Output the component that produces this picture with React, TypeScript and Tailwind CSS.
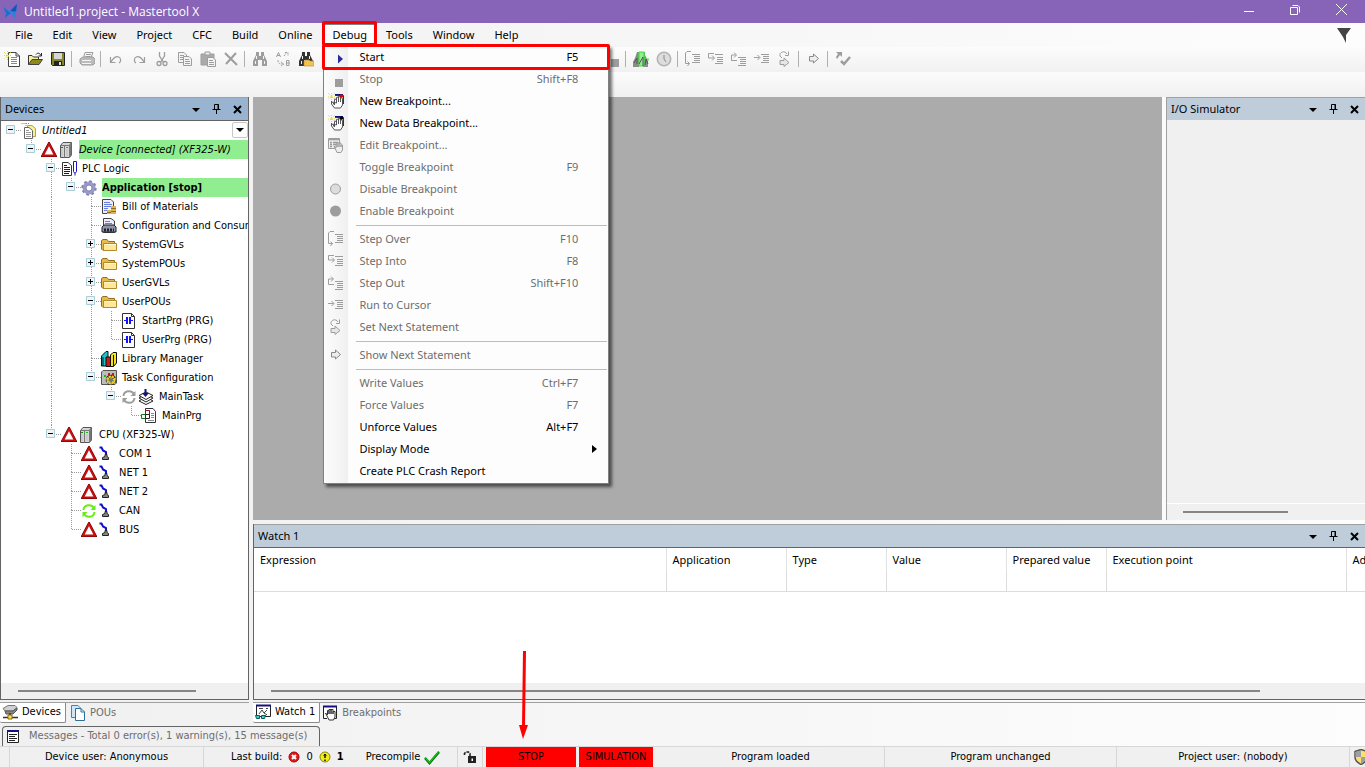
import React from 'react';

type IconProps = { children: React.ReactNode; size?: number };

const Icon: React.FC<IconProps> = ({ children, size = 16 }) => (
  <svg width={size} height={size} viewBox="0 0 16 16" fill="none" className="shrink-0" aria-hidden="true">
    {children}
  </svg>
);

const GRAY = '#9d9d9d';

const stepLines = 'M7 3.500h8M9 5.500h6M9 7.500h6M9 9.500h6M7 11.500h8';

const icons: Record<string, React.ReactNode> = {
  newFile: (
    <>
      <path d="M4.500 1.500H12L15.500 5V15.500H4.500Z" fill="#fff" stroke="#444" />
      <path d="M12 1.500V5H15.500" stroke="#444" />
      <path d="M7 6.500h6M7 8.500h6M7 10.500h6M7 12.500h6" stroke="#888" />
      <path d="M0 1l7 7M7 1L0 8M3.500 0v9M0 4.500h8" stroke="#d8d83a" strokeDasharray="1 1" />
    </>
  ),
  open: (
    <>
      <path d="M1.500 13.500V4.500H5L6.500 6H11.500V8.500" fill="#f5f09a" stroke="#333" />
      <path d="M1.500 13.500L5 8.500H15.500L12 13.500Z" fill="#8d8a1c" stroke="#444" />
      <path d="M9 3.500c2-2.500 4-1 5 1M14.500 2v3H11.500" stroke="#222" />
    </>
  ),
  save: (
    <>
      <path d="M1.500 1.500H14.500V14.500H2.500L1.500 13.500Z" fill="#85852a" stroke="#222" />
      <path d="M4 2h8v6H4z" fill="#d6d6d6" />
      <path d="M4 10h8v5H4z" fill="#222" />
      <path d="M9 11h2v3H9z" fill="#ddd" />
    </>
  ),
  print: (
    <>
      <path d="M4.500 6.500L6 1.500H14L12 6.500" fill="#f5f5f5" stroke={GRAY} />
      <path d="M7 3.500h5M6.500 5.500h5" stroke={GRAY} />
      <path d="M1 8l3-2h10l2 2v4l-2 2H3l-2-2z" fill="#bbb" stroke={GRAY} />
      <path d="M3 12.500h9M3 9.500h9" stroke="#f4f4f4" />
    </>
  ),
  undo: <path d="M2.500 6v5.500H7.500M3 11C6 5 10 4.500 12 7c1 2 .5 4-1 5" stroke={GRAY} strokeWidth="1.200" />,
  redo: <path d="M13.500 6v5.500H8.500M13 11C10 5 6 4.500 4 7c-1 2-.5 4 1 5" stroke={GRAY} strokeWidth="1.200" />,
  cut: (
    <>
      <path d="M5.500 1v4L10 12M10.500 1v4L6 12" stroke={GRAY} strokeWidth="1.300" />
      <circle cx="5" cy="12.500" r="2" stroke={GRAY} strokeWidth="1.300" />
      <circle cx="11" cy="12.500" r="2" stroke={GRAY} strokeWidth="1.300" />
    </>
  ),
  copy: (
    <>
      <path d="M1.500 1.500H7L9.500 4V11.500H1.500Z" fill="#f4f4f4" stroke={GRAY} />
      <path d="M3 4.500h4M3 6.500h5M3 8.500h4" stroke={GRAY} />
      <path d="M6.500 5.500H12L14.500 8V14.500H6.500Z" fill="#f4f4f4" stroke={GRAY} />
      <path d="M8 8.500h4M8 10.500h5M8 12.500h5" stroke={GRAY} />
    </>
  ),
  paste: (
    <>
      <path d="M1 3h13v11H1z" fill="#aaa" stroke={GRAY} />
      <path d="M5 1h5v3H5z" fill="#eee" stroke={GRAY} />
      <path d="M7.500 6.500H13L15.500 9V15.500H7.500Z" fill="#f4f4f4" stroke={GRAY} />
      <path d="M9 9.500h4M9 11.500h5M9 13.500h5" stroke={GRAY} />
    </>
  ),
  remove: <path d="M2 2l12 12M13 2L3 13" stroke={GRAY} strokeWidth="2" />,
  find: (
    <>
      <path d="M4 1h3v4h2V1h3v3l2 4 1 2v5h-5V9H6v6H1v-5l1-2 2-4z" fill={GRAY} />
      <path d="M4.500 5v3M11.500 5v3M3.500 10v3M12.500 10v3" stroke="#f4f4f4" />
    </>
  ),
  replace: (
    <>
      <path d="M1.500 6L3.500 1.500L5.500 6M2 4.500h3" stroke={GRAY} />
      <path d="M11.500 9.500h2.500v5h-2.500zM11.500 12h3" stroke={GRAY} />
      <path d="M9 5l3-4M10 1.500h3V5M3 9c0 4 2 4 5 4M6 11l3 2-3 2" stroke={GRAY} strokeDasharray="2 1" />
    </>
  ),
  findFolder: (
    <>
      <path d="M4 1h3v4h2V1h3v3l2 4 1 2v5h-5V9H6v6H1v-5l1-2 2-4z" fill="#333" />
      <path d="M4.500 5v3M11.500 5v3M3.500 10v3" stroke="#eee" />
      <path d="M6 10l2-1h3l1 1h4v5H6z" fill="#f2c34d" stroke="#b98a2b" strokeWidth=".6" />
    </>
  ),
  stopSmall: <path d="M7 8h8v8H7z" fill={GRAY} />,
  watchAll: (
    <>
      <path d="M4 1h3v4h2V1h3v3l2 4 1 2v6h-5V9H6v7H0v-5l2-4z" fill="#8c8c8c" />
      <path d="M6 1h5v14H6z" fill="#8df08d" stroke="#2fe52f" />
      <path d="M1 12l3-5v6M6 13l4-7v9M12 14l1-6 2 5" stroke="#555" />
      <path d="M12 5v3M15 7v3" stroke="#2fe52f" />
    </>
  ),
  clock: (
    <>
      <circle cx="8" cy="8" r="6.700" fill="#ddd" stroke="#b4b4b4" strokeWidth="1.600" />
      <path d="M8 4v4l2 3" stroke="#888" />
    </>
  ),
  stepOver: (
    <>
      <path d={stepLines} stroke={GRAY} />
      <path d="M6 .5H2L.5 2V12.500H4.500M2.500 10.500l2 2-2 2.500" stroke={GRAY} />
    </>
  ),
  stepInto: (
    <>
      <path d="M7 3.500h8M9 6.500h6M9 8.500h6M9 10.500h6M7 12.500h8" stroke={GRAY} />
      <path d="M6 2.500H.5V7H6M4 4.500L6.500 7L4 9.500" stroke={GRAY} />
    </>
  ),
  stepOut: (
    <>
      <path d="M7 6.500h8M9 8.500h6M9 10.500h6M9 12.500h6M7 14.500h8" stroke={GRAY} />
      <path d="M6 9.500H.5V4H5M3 1.500L5.500 4L3 6.500" stroke={GRAY} />
    </>
  ),
  runCursor: (
    <>
      <path d="M7 3.500h8M9 5.500h6M9 7.500h6M9 9.500h6M7 11.500h8" stroke={GRAY} />
      <path d="M0 6.500H5.500M3.500 4L6 6.500L3.500 9" stroke={GRAY} />
    </>
  ),
  setNext: (
    <>
      <path d="M3 5C2 1 8-1 10 3M11.500 .5V4.500H8M3 5l2 2" stroke={GRAY} />
      <path d="M3 9.500H7V7L12 11.500L7 15.500V13.500H3Z" fill="#e6e6e6" stroke={GRAY} />
    </>
  ),
  showNext: <path d="M3.500 5.500H7.500V3L12.500 7.500L7.500 12V10H3.500Z" fill="#eee" stroke="#888" />,
  flow: (
    <>
      <path d="M1 1h6v5L5 4 2 8 1 6l2-3z" fill={GRAY} />
      <path d="M6 10l3 3 6-7" stroke={GRAY} strokeWidth="2.500" />
    </>
  ),
  start: <path d="M10 5.500l5 4.500-5 4.500z" fill="#2b2b9f" />,
  newBreakpoint: (
    <>
      <path d="M7 2.500h8.500V11" stroke="#2a2a8c" />
      <path d="M7 1.500h8" stroke="#12127f" />
      <path d="M3.500 8v3l3 4h6l2-3V5.500l-2-1V9M12.500 9V4l-2-.5V9M10.500 9V4L8.500 4.500V10M8.500 10V6.500L6.500 6v6L4.500 9z" fill="#fff" stroke="#555" />
      <circle cx="13.500" cy="3" r="1.800" fill="#e00000" />
      <path d="M0 0l7 7M7 0L0 7M3.500 0v8M0 4h8" stroke="#dddd30" strokeDasharray="1 1" />
    </>
  ),
  newDataBreakpoint: (
    <>
      <path d="M7 2.500h8.500V11" stroke="#2a2a8c" />
      <path d="M7 1.500h8" stroke="#12127f" />
      <path d="M3.500 8v3l3 4h6l2-3V5.500l-2-1V9M12.500 9V4l-2-.5V9M10.500 9V4L8.500 4.500V10M8.500 10V6.500L6.500 6v6L4.500 9z" fill="#fff" stroke="#555" />
      <circle cx="13.500" cy="3" r="1.800" fill="#000" />
      <path d="M0 0l7 7M7 0L0 7M3.500 0v8M0 4h8" stroke="#dddd30" strokeDasharray="1 1" />
    </>
  ),
  editBreakpoint: (
    <>
      <path d="M.5 1.500H11.500V11.500H.5Z" fill="#eee" stroke={GRAY} />
      <path d="M1 2.500h10M2 5.500h2M5 5.500h5M2 7.500h2M5 7.500h5M2 9.500h2" stroke={GRAY} strokeWidth="1.300" />
      <path d="M6 9l2 2V7h1v3-4h2v4-4h2v4-2h1.500v5L13 15.500H9z" fill="#eee" stroke={GRAY} />
    </>
  ),
  disableBreakpoint: <circle cx="7.500" cy="8" r="5" fill="#ddd" stroke={GRAY} />,
  enableBreakpoint: <circle cx="7.500" cy="8" r="5.500" fill={GRAY} />,
  project: (
    <>
      <path d="M.5 .5H5V3M5 .5H9" stroke="#888" strokeDasharray="1 1" />
      <path d="M6.500 2.500H11L14.500 5.500V13.500H6.500Z" fill="#faf08c" stroke="#a8a464" />
      <path d="M3.500 4.500H8L11.500 7.500V15.500H3.500Z" fill="#fff" stroke="#666" />
      <path d="M5 7.500h3M5 9.500h5M5 11.500h5M5 13.500h5" stroke="#999" />
    </>
  ),
  warning: (
    <>
      <path d="M8 2L14 13.500H2Z" fill="#fff" stroke="#600" strokeWidth="3" />
      <path d="M8 2L14 13.500H2Z" fill="#fff" stroke="#c80f0f" strokeWidth="2" />
    </>
  ),
  device: (
    <>
      <path d="M2.500 3.500L5 .5H13.500V13L11.500 15.500H2.500Z" fill="#d6d6d6" stroke="#555" />
      <path d="M11 3.500L13.500 1V13L11 15.500Z" fill="#777" />
      <path d="M6.500 3.500v12M2.500 3.500H11L13.500 .5" stroke="#777" />
      <path d="M4 7v7M9 7v7" stroke="#bbb" />
      <path d="M3 5.500h2" stroke="#0a8a0a" />
      <path d="M8 5.500h2" stroke="#0c0" />
    </>
  ),
  plc: (
    <>
      <path d="M1.500 1.500H7L10.500 4.500V14.500H1.500Z" fill="#fff" stroke="#333" />
      <path d="M3 4.500h3M3 6.500h6M3 8.500h6M3 10.500h6M3 12.500h5" stroke="#12128c" />
      <path d="M12.500 .5H15.500V10.500L14.500 12H13.500L12.500 10.500Z" fill="#fff" stroke="#1818c8" />
      <path d="M14 12v2.500" stroke="#1818c8" />
    </>
  ),
  gear: (
    <>
      <circle cx="8" cy="8" r="4.800" stroke="#9a9ac8" strokeWidth="3.400" />
      <circle cx="8" cy="8" r="6.800" stroke="#8080b4" strokeWidth="1.800" strokeDasharray="2.700 2.640" />
      <circle cx="8" cy="8" r="3" stroke="#7070a4" strokeWidth=".8" />
    </>
  ),
  bill: (
    <>
      <path d="M1.500 .5H10L12.500 3V14.500H1.500Z" fill="#eef" stroke="#444" />
      <path d="M3 3.500h6M3 5.500h8M3 7.500h8M3 9.500h4M3 11.500h4" stroke="#6a7ee0" />
      <path d="M10 7h5v8h-5zM6 11h5v4H6z" fill="#dcb650" />
      <path d="M10 9.500h5M10 12.500h5M6 13.500h4" stroke="#8f6d1f" />
    </>
  ),
  config: (
    <>
      <path d="M2.500 .5H10L13.500 3V14.500H2.500Z" fill="#eef" stroke="#444" />
      <path d="M4 3.500h5M4 5.500h7" stroke="#6a7ee0" />
      <path d="M1 9l2-2h10l2 2v5H1z" fill="#8d95a8" stroke="#222" />
      <path d="M3 12h10" stroke="#223" strokeWidth="3" strokeDasharray="2 1" />
    </>
  ),
  folder: (
    <>
      <path d="M.5 3.500L2 2.500H6L7.500 4.500H13.500V13.500H2L.5 12Z" fill="#e6bb4c" stroke="#94701c" />
      <path d="M2.500 6.500H15.500V13.500H2.500Z" fill="#ffe79c" stroke="#b08a30" />
      <path d="M3.500 7.500h11" stroke="#fff8d0" />
    </>
  ),
  prg: (
    <>
      <path d="M1.500 .5H10.500L13.500 3.500V15.500H1.500Z" fill="#fff" stroke="#333" />
      <path d="M10.500 .5V3.500H13.500" stroke="#333" />
      <path d="M3 7.500h3M9 7.500h3" stroke="#1212ff" />
      <path d="M6 4v7M9 4v7" stroke="#1212ff" strokeWidth="2" />
    </>
  ),
  library: (
    <>
      <path d="M.5 5L5 .5H7V15H.5Z" fill="#19c4c9" stroke="#111" />
      <path d="M5 6h5v9.500H5z" fill="#d31515" stroke="#111" />
      <path d="M9.500 4L12 1.500H15.500V12L12.500 15.500H9.500Z" fill="#f2e31c" stroke="#111" />
      <path d="M12.500 4v11M2 6v9" stroke="#111" />
    </>
  ),
  taskConfig: (
    <>
      <path d="M.5 2L2 .5H15.500V13L14 14.500H.5Z" fill="#bdbdbd" stroke="#555" />
      <path d="M3 5h2v2H3z" fill="#0c0" />
      <path d="M8 3v3M12 3v3" stroke="#d11" strokeWidth="2" />
      <circle cx="10" cy="10" r="3.500" fill="#fff" stroke="#222" strokeWidth="3.600" strokeDasharray="2 1" />
      <circle cx="10" cy="10" r="3.500" stroke="#e8d420" strokeWidth="2.200" strokeDasharray="2.200 .6" />
      <circle cx="10" cy="10" r="1.200" fill="#fff" stroke="#333" />
    </>
  ),
  refresh: (
    <>
      <path d="M2.500 7C3 1.500 10 .5 13 5M13.500 9C13 14.500 6 15.500 3 11" stroke={GRAY} strokeWidth="2" />
      <path d="M14.500 2v5h-5zM1.500 14V9h5z" fill={GRAY} />
    </>
  ),
  refreshGreen: (
    <>
      <path d="M2.500 7C3 1.500 10 .5 13 5M13.500 9C13 14.500 6 15.500 3 11" stroke="#66ee11" strokeWidth="2" />
      <path d="M14.500 2v5h-5zM1.500 14V9h5z" fill="#66ee11" />
    </>
  ),
  task: (
    <>
      <path d="M1 12l7-4 7 4-7 3.500z" fill="#fff" stroke="#222" />
      <path d="M1 9l7-4 7 4-7 4z" fill="#fff" stroke="#222" />
      <path d="M1 6.500L8 3l7 3.500-7 4z" fill="#fff" stroke="#222" />
      <path d="M7.500 0v4" stroke="#12128c" strokeWidth="2" />
      <path d="M4 4h7L7.500 8z" fill="#12128c" />
    </>
  ),
  mainPrg: (
    <>
      <path d="M4.500 .5H12L14.500 3.500V14.500H4.500Z" fill="#fff" stroke="#333" />
      <path d="M10 5.500h3M10 7.500h3M10 9.500h3M7 12.500h6" stroke="#888" />
      <path d="M4.500 2.500h4v4h-4z" fill="#fff" stroke="#8a1028" />
      <path d="M.5 6.500h4v4h-4z" fill="#fff" stroke="#0a7a0a" />
      <path d="M4.500 6.500h4v4h-4z" fill="#fff" stroke="#222" />
    </>
  ),
  port: (
    <>
      <path d="M1.500 1.500h2L5 4.500l3 1.500v3" stroke="#1111cc" strokeWidth="2" />
      <path d="M7 8.500h2v2l1.500 1v2h-6v-2l2.500-1z" fill="#888" stroke="#222" />
    </>
  ),
  devicesTab: (
    <>
      <path d="M1 4.500l5-3h7l2 2-4 3.500H3z" fill="#d0d0d0" stroke="#777" />
      <path d="M3 7h8l4-3v2l-4 4H4z" fill="#888" stroke="#555" />
      <path d="M8 9v3M1 13.500h15" stroke="#333" strokeWidth="1.600" />
      <path d="M6 11h4v4H6z" fill="#ffe14a" stroke="#8a6a00" />
    </>
  ),
  pous: (
    <>
      <path d="M1.500 .5H8L10.500 3V12.500H1.500Z" fill="#cfe6fa" stroke="#3a86b8" />
      <path d="M5.500 3.500H11L14.500 7V15.500H5.500Z" fill="#fff" stroke="#2b7099" />
      <path d="M11 3.500V7H14.500" stroke="#2b7099" />
    </>
  ),
  watchTab: (
    <>
      <path d="M1.500 1.500H15.500V12.500H1.500Z" fill="#fff" stroke="#222" />
      <path d="M1 1.500h15" stroke="#12127f" strokeWidth="2" />
      <path d="M4 10l3-4 2 3 3-3M4 4.500h4M11 4.500h2M9 9l3 2" stroke="#444" />
      <path d="M.5 11.500h4v3h-3zM6.500 11.500h4l-1 3h-3z" fill="#3fd0d0" stroke="#0a5a5a" />
    </>
  ),
  breakpointsTab: (
    <>
      <path d="M5 13.500H1.500V1.500H14.500V13.500H12" fill="#fff" stroke="#222" />
      <path d="M1 1.500h14" stroke="#12127f" strokeWidth="2" />
      <path d="M3.500 8l2 2V5.500h1.500V9 4.500h2V9 4.500h2V9 6.500h2V12l-1.500 3H7z" fill="#fff" stroke="#333" />
    </>
  ),
  messages: (
    <>
      <path d="M2.500 3.500H13.500V14.500H2.500Z" fill="#fff" stroke="#222" />
      <path d="M2 3h12" stroke="#12127f" strokeWidth="2" />
      <path d="M4 6.500h8M4 8.500h6M4 10.500h8M4 12.500h6" stroke="#222" />
    </>
  ),
  error: (
    <>
      <circle cx="8" cy="8" r="5" fill="#e01818" stroke="#a00" />
      <path d="M6 6l4 4M10 6l-4 4" stroke="#fff" strokeWidth="2" />
    </>
  ),
  alert: (
    <>
      <circle cx="8" cy="8" r="5" fill="#f2ec1e" stroke="#8a8400" />
      <path d="M8 5v4M8 10.500v1.500" stroke="#111" strokeWidth="1.500" />
      <path d="M6.500 6.500L8 5l1.500 1.500" stroke="#111" />
    </>
  ),
  check: (
    <>
      <path d="M1 9l4.500 5L15 3" stroke="#0a6b0a" strokeWidth="2.600" />
      <path d="M1 8.500l4.500 5L15 2.500" stroke="#19c419" strokeWidth="1.200" />
    </>
  ),
  lock: (
    <>
      <path d="M2.500 6V4.500L4 3h2.500L8 4.500V7" stroke="#222" strokeWidth="1.600" strokeDasharray="3 1" />
      <path d="M6 7h8v7H6z" fill="#222" />
      <path d="M9.500 9.500h1.500v2.500h-1.500z" fill="#fff" />
    </>
  ),
  shield: (
    <>
      <path d="M2 2.500L8 .5L14 2.500V8C14 12 11 14 8 15.500C5 14 2 12 2 8Z" fill="#ffdf6b" stroke="#555" strokeWidth="1.500" />
      <path d="M8 1.500V8H2.500V3ZM8 8H13.500C13 11 11 13.500 8 14.700Z" fill="#9aa0a6" />
    </>
  ),
};

const MENU_LEFT = ['File', 'Edit', 'View', 'Project', 'CFC', 'Build', 'Online'];
const MENU_RIGHT = ['Tools', 'Window', 'Help'];

type MenuEntry = {
  label: string;
  icon?: string;
  shortcut?: string;
  enabled?: boolean;
  submenu?: boolean;
  marked?: boolean;
};

const DEBUG_GROUPS: MenuEntry[][] = [
  [
    { label: 'Start', icon: 'start', shortcut: 'F5', enabled: true, marked: true },
    { label: 'Stop', icon: 'stopSmall', shortcut: 'Shift+F8' },
    { label: 'New Breakpoint...', icon: 'newBreakpoint', enabled: true },
    { label: 'New Data Breakpoint...', icon: 'newDataBreakpoint', enabled: true },
    { label: 'Edit Breakpoint...', icon: 'editBreakpoint' },
    { label: 'Toggle Breakpoint', shortcut: 'F9' },
    { label: 'Disable Breakpoint', icon: 'disableBreakpoint' },
    { label: 'Enable Breakpoint', icon: 'enableBreakpoint' },
  ],
  [
    { label: 'Step Over', icon: 'stepOver', shortcut: 'F10' },
    { label: 'Step Into', icon: 'stepInto', shortcut: 'F8' },
    { label: 'Step Out', icon: 'stepOut', shortcut: 'Shift+F10' },
    { label: 'Run to Cursor', icon: 'runCursor' },
    { label: 'Set Next Statement', icon: 'setNext' },
  ],
  [{ label: 'Show Next Statement', icon: 'showNext' }],
  [
    { label: 'Write Values', shortcut: 'Ctrl+F7' },
    { label: 'Force Values', shortcut: 'F7' },
    { label: 'Unforce Values', shortcut: 'Alt+F7', enabled: true },
    { label: 'Display Mode', enabled: true, submenu: true },
    { label: 'Create PLC Crash Report', enabled: true },
  ],
];

const FILE_TOOLS = [
  'newFile', 'open', 'save', '|', 'print', '|', 'undo', 'redo', 'cut', 'copy', 'paste', 'remove', '|',
  'find', 'replace', 'findFolder',
];
const DEBUG_TOOLS = [
  'stopSmall', '|', 'watchAll', 'clock', '|', 'stepOver', 'stepInto', 'stepOut', 'runCursor', 'setNext', '|',
  'showNext', '|', 'flow',
];

type TreeNode = {
  label: string;
  level: number;
  icons: string[];
  toggle?: 'open' | 'closed';
  // levels at which an ancestor's line runs through this row
  guides?: number[];
  last?: boolean;
  style?: string;
};

const TREE: TreeNode[] = [
  { label: 'Untitled1', level: 0, icons: ['project'], toggle: 'open', last: true, style: 'italic' },
  { label: 'Device [connected] (XF325-W)', level: 1, icons: ['warning', 'device'], toggle: 'open', last: true, style: 'italic bg-[#90ee90] flex-1' },
  { label: 'PLC Logic', level: 2, icons: ['plc'], toggle: 'open' },
  { label: 'Application [stop]', level: 3, icons: ['gear'], toggle: 'open', guides: [2], last: true, style: 'font-bold bg-[#90ee90] flex-1' },
  { label: 'Bill of Materials', level: 4, icons: ['bill'], guides: [2] },
  { label: 'Configuration and Consumption', level: 4, icons: ['config'], guides: [2] },
  { label: 'SystemGVLs', level: 4, icons: ['folder'], toggle: 'closed', guides: [2] },
  { label: 'SystemPOUs', level: 4, icons: ['folder'], toggle: 'closed', guides: [2] },
  { label: 'UserGVLs', level: 4, icons: ['folder'], toggle: 'closed', guides: [2] },
  { label: 'UserPOUs', level: 4, icons: ['folder'], toggle: 'open', guides: [2] },
  { label: 'StartPrg (PRG)', level: 5, icons: ['prg'], guides: [2, 4] },
  { label: 'UserPrg (PRG)', level: 5, icons: ['prg'], guides: [2, 4], last: true },
  { label: 'Library Manager', level: 4, icons: ['library'], guides: [2] },
  { label: 'Task Configuration', level: 4, icons: ['taskConfig'], toggle: 'open', guides: [2], last: true },
  { label: 'MainTask', level: 5, icons: ['refresh', 'task'], toggle: 'open', guides: [2], last: true },
  { label: 'MainPrg', level: 6, icons: ['mainPrg'], guides: [2], last: true },
  { label: 'CPU (XF325-W)', level: 2, icons: ['warning', 'device'], toggle: 'open', last: true },
  { label: 'COM 1', level: 3, icons: ['warning', 'port'] },
  { label: 'NET 1', level: 3, icons: ['warning', 'port'] },
  { label: 'NET 2', level: 3, icons: ['warning', 'port'] },
  { label: 'CAN', level: 3, icons: ['refreshGreen', 'port'] },
  { label: 'BUS', level: 3, icons: ['warning', 'port'], last: true },
];

const WATCH_COLUMNS = [
  { label: 'Expression', width: 'w-[412px]' },
  { label: 'Application', width: 'w-[120px]' },
  { label: 'Type', width: 'w-[100px]' },
  { label: 'Value', width: 'w-[120px]' },
  { label: 'Prepared value', width: 'w-[100px]' },
  { label: 'Execution point', width: 'w-[240px]' },
  { label: 'Address', width: 'w-[120px]' },
];

const Toolbar: React.FC<{ items: string[] }> = ({ items }) => (
  <div className="flex items-center">
    {items.map((name, i) =>
      name === '|' ? (
        <span key={i} className="mx-[2px] h-4 w-[2px] border-l border-[#b0b0b0]" />
      ) : (
        <button key={i} aria-label={name} className="flex h-6 w-[23px] items-center justify-center">
          <Icon>{icons[name]}</Icon>
        </button>
      )
    )}
  </div>
);

const MenuRow: React.FC<{ entry: MenuEntry }> = ({ entry }) => (
  <button
    role="menuitem"
    disabled={!entry.enabled}
    className={`relative flex h-[22px] w-full items-center pl-1 text-left ${entry.enabled ? 'text-black' : 'text-[#6d6d6d]'}`}
  >
    <span className="flex w-[31px] shrink-0">{entry.icon && <Icon>{icons[entry.icon]}</Icon>}</span>
    <span className="flex-1">{entry.label}</span>
    <span className="pr-[30px]">{entry.shortcut}</span>
    {entry.submenu && (
      <svg width="5" height="8" viewBox="0 0 5 8" className="absolute right-[11px]">
        <path d="M0 0l5 4-5 4z" fill="#000" />
      </svg>
    )}
    {entry.marked && (
      <span className="absolute -inset-x-[2px] -inset-y-[2px] rounded-xs border-3 border-[#ff0000]" />
    )}
  </button>
);

const DebugMenu = () => (
  <div
    role="menu"
    className="absolute top-[21px] left-0 z-20 w-[286px] border border-[#808080] bg-[#fdfdfd] bg-[linear-gradient(90deg,#fcfcfc_0,#f0f0f0_24px,#fdfdfd_24px)] pb-px shadow-[3px_3px_3px_rgba(0,0,0,0.55)]"
  >
    {DEBUG_GROUPS.map((group, i) => (
      <div key={i}>
        {i > 0 && <div className="mt-[3px] mr-[1px] mb-[2px] ml-8 h-px bg-[#bdbdbd]" />}
        {group.map((entry) => (
          <MenuRow key={entry.label} entry={entry} />
        ))}
      </div>
    ))}
  </div>
);

const PanelHeader: React.FC<{ title: string; active?: boolean }> = ({ title, active }) => (
  <div
    className={`flex h-[23px] shrink-0 items-center border-t border-[#a0a0a0] pr-[6px] pl-1 ${active ? 'bg-[#99b4d1]' : 'bg-[#bfcddb]'}`}
  >
    <h2 className="flex-1">{title}</h2>
    <div className="flex items-center gap-3">
      <button aria-label="Window position">
        <svg width="8" height="4" viewBox="0 0 8 4" className="mt-[2px]">
          <path d="M0 0h8L4 4z" />
        </svg>
      </button>
      <button aria-label="Auto hide">
        <svg width="9" height="10" viewBox="0 0 9 10" fill="none" stroke="#000">
          <path d="M2.500 .5H6.500V5.500H2.500ZM6 0V6M.5 5.500H8.500M4.500 6V10" />
        </svg>
      </button>
      <button aria-label="Close">
        <svg width="9" height="9" viewBox="0 0 9 9" stroke="#000" strokeWidth="2">
          <path d="M1 1l7 7M8 1L1 8" />
        </svg>
      </button>
    </div>
  </div>
);

const TreeCell: React.FC<{ paths: string; toggle?: 'open' | 'closed' }> = ({ paths, toggle }) => (
  <svg width="20" height="19" viewBox="0 0 20 19" fill="none" className="shrink-0">
    <path d={paths} stroke="#9a9a9a" strokeDasharray="1 1" />
    {toggle && (
      <>
        <path d="M5.500 4.500H13.500V12.500H5.500Z" fill="#f0f4f6" stroke="#a9cdd8" />
        <path d={toggle === 'closed' ? 'M7 8.500h5M9.500 6v5' : 'M7 8.500h5'} stroke="#000" />
      </>
    )}
  </svg>
);

const TreeRow: React.FC<{ node: TreeNode }> = ({ node }) => {
  const ownLine = `${node.level > 0 ? 'M10.500 0V9' : ''}${node.last ? '' : 'M10.500 9V19'}M11 9.500H20`;
  return (
    <li className="flex h-[19px] items-center whitespace-nowrap">
      {Array.from({ length: node.level }, (_, level) => (
        <TreeCell key={level} paths={node.guides?.includes(level) ? 'M10.500 0V19' : ''} />
      ))}
      <TreeCell paths={ownLine} toggle={node.toggle} />
      <span className="flex shrink-0 gap-px pr-[5px]">
        {node.icons.map((name) => (
          <Icon key={name}>{icons[name]}</Icon>
        ))}
      </span>
      <span className={`leading-[19px] ${node.style ?? ''}`}>{node.label}</span>
    </li>
  );
};

const DevicesPanel = () => (
  <section className="flex w-[249px] shrink-0 flex-col border-r border-b border-l border-[#646464] bg-white">
    <PanelHeader title="Devices" active />
    <div className="relative min-h-0 flex-1 overflow-hidden border-t border-[#646464]">
      <ul className="font-['DejaVu_Sans_Condensed','DejaVu_Sans',sans-serif]">
        {TREE.map((node) => (
          <TreeRow key={node.label} node={node} />
        ))}
      </ul>
      <button
        aria-label="Tree options"
        className="absolute top-px right-0 flex h-4 w-4 items-center justify-center rounded-xs border border-[#c8c8c8] bg-[#fdfdfd]"
      >
        <svg width="8" height="4" viewBox="0 0 8 4">
          <path d="M0 0h8L4 4z" />
        </svg>
      </button>
    </div>
    <div className="flex h-4 items-center bg-[#f0f0f0] pr-[52px] pl-[17px]">
      <div className="h-[2px] flex-1 bg-[#858585]" />
    </div>
  </section>
);

const WatchPanel = () => (
  <section className="flex h-[176px] shrink-0 flex-col overflow-hidden border-b border-l border-[#646464] bg-white">
    <PanelHeader title="Watch 1" />
    <div className="min-h-0 flex-1 overflow-hidden border-t border-[#646464]">
      <table className="w-[1212px] table-fixed border-collapse">
        <thead>
          <tr className="h-[23px]">
            {WATCH_COLUMNS.map((col) => (
              <th key={col.label} className={`border-r border-[#e2e2e2] pl-[6px] text-left font-normal ${col.width}`}>
                {col.label}
              </th>
            ))}
          </tr>
        </thead>
        <tbody>
          <tr className="h-5 border-b border-[#dcdcdc]">
            {WATCH_COLUMNS.map((col) => (
              <td key={col.label} className="border-r border-[#dcdcdc]" />
            ))}
          </tr>
        </tbody>
      </table>
    </div>
    <div className="flex h-4 items-center bg-[#f0f0f0] pr-[105px] pl-[17px]">
      <div className="h-[2px] flex-1 bg-[#858585]" />
    </div>
  </section>
);

const Tab: React.FC<{ icon: string; label: string; active?: boolean }> = ({ icon, label, active }) => (
  <button
    role="tab"
    aria-selected={!!active}
    className={`flex h-5 items-center gap-1 px-[2px] pb-px ${active ? 'rounded-b-xs border-r border-b border-[#8a8a8a] bg-white pr-1 text-black' : 'text-[#6d6d6d]'}`}
  >
    <Icon>{icons[icon]}</Icon>
    {label}
  </button>
);

const StatusBar = () => (
  <footer className="flex h-[21px] shrink-0 items-center overflow-hidden border-t border-[#d7d7d7] bg-[#f0f0f0] pl-[9px] text-center font-['DejaVu_Sans_Condensed','DejaVu_Sans',sans-serif] leading-5 whitespace-nowrap">
    <div className="w-[195px] shrink-0 border-x border-[#d7d7d7]">Device user: Anonymous</div>
    <div className="flex w-[254px] shrink-0 items-center border-r border-[#d7d7d7] pl-[27px]">
      Last build:
      <span className="flex items-center gap-1 pl-1">
        <Icon>{icons.error}</Icon>0
      </span>
      <span className="flex items-center gap-1 pl-1">
        <Icon>{icons.alert}</Icon>
        <b>1</b>
      </span>
      <span className="flex items-center gap-1 pl-[22px]">
        Precompile
        <Icon>{icons.check}</Icon>
      </span>
    </div>
    <div className="flex h-5 w-[25px] shrink-0 items-center justify-center border-r border-[#d7d7d7]">
      <Icon>{icons.lock}</Icon>
    </div>
    <div className="ml-[3px] w-[90px] shrink-0 bg-[#ff0000]">STOP</div>
    <div className="ml-[3px] w-[74px] shrink-0 bg-[#ff0000]">SIMULATION</div>
    <div className="flex-1 border-r border-[#d7d7d7] pl-1">Program loaded</div>
    <div className="w-[232px] shrink-0 border-r border-[#d7d7d7]">Program unchanged</div>
    <div className="w-[233px] shrink-0 border-r border-[#d7d7d7]">Project user: (nobody)</div>
    <div className="w-[15px] shrink-0 pl-[3px]">
      <Icon>{icons.shield}</Icon>
    </div>
  </footer>
);

const App = () => {
  return (
    <div className="flex h-screen flex-col overflow-hidden bg-[linear-gradient(90deg,#f0f0f0,#fdfdfd)] font-['Noto_Sans','Liberation_Sans',sans-serif] text-[11px] leading-4 text-black">
      <header className="flex h-[23px] shrink-0 items-center bg-[#8764b8] pl-[3px] text-white">
        <svg width="15" height="15" viewBox="0 0 15 15" aria-hidden="true">
          <path d="M0 3l7 4L14 0l-1 8-4 2z" fill="#2f8de0" />
          <path d="M7 7l7-7-1 8z" fill="#1454b8" />
          <path d="M0 3l8 6-6 5 1-5z" fill="#1c6fd0" />
          <path d="M8 9l5-2-1 8z" fill="#2f7fdc" />
        </svg>
        <h1 className="flex-1 pl-[6px] font-['Open_Sans',sans-serif] text-[12px]">Untitled1.project - Mastertool X</h1>
        <div className="flex items-center gap-9 pr-[18px]">
          <button aria-label="Minimize" className="pb-1">
            <svg width="10" height="10" viewBox="0 0 10 10" stroke="#fff">
              <path d="M0 6.500h10" />
            </svg>
          </button>
          <button aria-label="Restore" className="pb-1">
            <svg width="10" height="10" viewBox="0 0 10 10" fill="none" stroke="#fff">
              <path d="M.5 2.500h7v7h-7zM2.500 .5H8L9.500 2V7.500" />
            </svg>
          </button>
          <button aria-label="Close" className="pb-1">
            <svg width="11" height="11" viewBox="0 0 11 11" stroke="#fff">
              <path d="M0 0l11 11M11 0L0 11" />
            </svg>
          </button>
        </div>
      </header>

      <nav className="flex h-6 shrink-0 items-center pl-[5px]">
        {MENU_LEFT.map((label) => (
          <button key={label} className="h-6 px-[10px]">{label}</button>
        ))}
        <div className="relative mt-px ml-px h-[21px] self-start">
          <button className="h-[21px] border border-b-0 border-[#808080] bg-[#fdfdfd] px-2">Debug</button>
          <span className="pointer-events-none absolute -inset-x-px -top-[3px] -bottom-px z-10 rounded-xs border-3 border-[#ff0000]" />
          <DebugMenu />
        </div>
        {MENU_RIGHT.map((label) => (
          <button key={label} className="h-6 px-[10px]">{label}</button>
        ))}
        <button aria-label="Filter" className="ml-auto pr-[14px]">
          <svg width="14" height="15" viewBox="0 0 14 15">
            <path d="M0 0h14L9 7v8L6 9z" fill="#444" />
          </svg>
        </button>
      </nav>

      <div className="flex h-[25px] shrink-0 items-center bg-linear-to-b from-[#fcfcfc] to-[#f1f1f1] pb-[2px]">
        <Toolbar items={FILE_TOOLS} />
        <div className="w-[283px] shrink-0" />
        <Toolbar items={DEBUG_TOOLS} />
      </div>
      <div className="h-[25px] shrink-0 bg-linear-to-b from-[#fcfcfc] to-[#f0f0f0]" />

      <main className="flex min-h-0 flex-1 gap-1">
        <DevicesPanel />
        <div className="flex min-w-0 flex-1 flex-col gap-1">
          <div className="flex min-h-0 flex-1 gap-1">
            <div className="flex-1 bg-[#ababab]" />
            <aside className="flex w-[199px] shrink-0 flex-col border-l border-[#a0a0a0] bg-[#f0f0f0]">
              <PanelHeader title="I/O Simulator" />
              <div className="flex-1" />
              <div className="flex h-[17px] items-center border-t border-white pr-[77px] pl-4">
                <div className="h-[2px] flex-1 bg-[#858585]" />
              </div>
            </aside>
          </div>
          <WatchPanel />
        </div>
      </main>

      <div className="mt-[2px] flex h-6 shrink-0 gap-1 font-['DejaVu_Sans_Condensed','DejaVu_Sans',sans-serif]">
        <div role="tablist" className="flex w-[249px] shrink-0 items-start gap-[2px] border-t border-[#a0a0a0]">
          <Tab icon="devicesTab" label="Devices" active />
          <Tab icon="pous" label="POUs" />
        </div>
        <div role="tablist" className="relative flex flex-1 items-start border-t border-[#a0a0a0]">
          <Tab icon="watchTab" label="Watch 1" active />
          <Tab icon="breakpointsTab" label="Breakpoints" />
          {/* callout pointing at the run state */}
          <svg width="10" height="88" viewBox="0 0 10 88" className="absolute bottom-[-13px] left-[266px] z-10">
            <path d="M5.500 0L4.500 76" stroke="#ff0000" strokeWidth="3" />
            <path d="M0 74H9L4 88Z" fill="#ff0000" />
          </svg>
        </div>
      </div>
      <div className="flex h-5 shrink-0 pl-[2px]">
        <button className="flex w-[318px] items-center gap-2 rounded-t-sm border border-b-0 border-[#646464] bg-[#f0f0f0] pb-px pl-[2px] font-['DejaVu_Sans_Condensed','DejaVu_Sans',sans-serif] whitespace-nowrap text-[#6d6d6d]">
          <Icon>{icons.messages}</Icon>
          Messages - Total 0 error(s), 1 warning(s), 15 message(s)
        </button>
      </div>
      <StatusBar />
    </div>
  );
};

export default App;
